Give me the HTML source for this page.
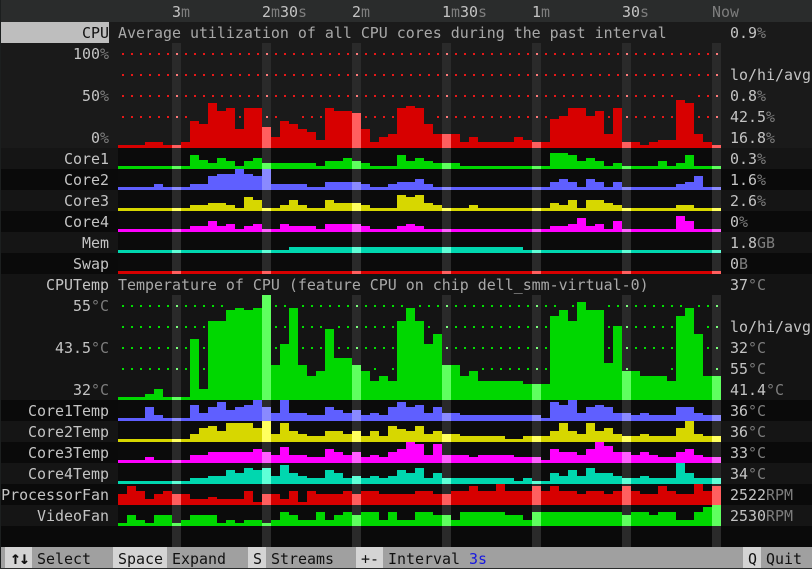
<!DOCTYPE html>
<html><head><meta charset="utf-8"><style>
html,body{margin:0;padding:0;background:#0a0a0a}
#t{position:relative;width:812px;height:569px;overflow:hidden;background:#0a0a0a;font:14.95px/21px "DejaVu Sans Mono","Liberation Mono",monospace;color:#c4c4c4}
#t svg{position:absolute;left:0;top:0}
.l,.r,.x{position:absolute;white-space:pre;height:21px;margin-top:1px}
.l{right:703px;text-align:right}
.r{left:730px}
i{font-style:normal;color:#7d7d7d}
.k{color:#111}
</style></head><body><div id="t">
<svg width="812" height="569" viewBox="0 0 812 569" shape-rendering="crispEdges">
<rect width="812" height="22" fill="#2a2c2c"/>
<rect y="22" width="812" height="126" fill="#1a1a1a"/>
<rect y="148" width="812" height="21" fill="#151515"/>
<rect y="169" width="812" height="21" fill="#0a0a0a"/>
<rect y="190" width="812" height="21" fill="#151515"/>
<rect y="211" width="812" height="21" fill="#0a0a0a"/>
<rect y="232" width="812" height="21" fill="#151515"/>
<rect y="253" width="812" height="21" fill="#0a0a0a"/>
<rect y="274" width="812" height="126" fill="#141414"/>
<rect y="400" width="812" height="21" fill="#0a0a0a"/>
<rect y="421" width="812" height="21" fill="#151515"/>
<rect y="442" width="812" height="21" fill="#0a0a0a"/>
<rect y="463" width="812" height="21" fill="#151515"/>
<rect y="484" width="812" height="21" fill="#0a0a0a"/>
<rect y="505" width="812" height="21" fill="#151515"/>
<rect x="118" y="148" width="603" height="126" fill="#0b0b0b"/>
<rect x="118" y="400" width="603" height="126" fill="#0b0b0b"/>
<rect x="1" y="22" width="108" height="21" fill="#bebebe"/>
<rect y="547" width="812" height="21" fill="#a0a0a0"/>
<rect x="5" y="547" width="27" height="21" fill="#d4d4d4"/>
<rect x="113" y="547" width="54" height="21" fill="#d4d4d4"/>
<rect x="248" y="547" width="18" height="21" fill="#d4d4d4"/>
<rect x="356" y="547" width="27" height="21" fill="#d4d4d4"/>
<rect x="743" y="547" width="18" height="21" fill="#d4d4d4"/>
<path fill="#2a2a2a" d="M172 43h9V274h-9zM172 295h9V547h-9zM262 43h9V274h-9zM262 295h9V547h-9zM352 43h9V274h-9zM352 295h9V547h-9zM442 43h9V274h-9zM442 295h9V547h-9zM532 43h9V274h-9zM532 295h9V547h-9zM622 43h9V274h-9zM622 295h9V547h-9zM712 43h9V274h-9zM712 295h9V547h-9z"/>
<g transform="translate(0.5 0)" fill="none" stroke-width="2" stroke-dasharray="2 7">
<path stroke="#e81818" d="M121.5 54H717.5M121.5 75H717.5M121.5 96H672.5M697.5 96H717.5M121.5 117H186.5M238.5 117H240.5M265.5 117H276.5M301.5 117H321.5M364.5 117H393.5M436.5 117H546.5M607.5 117H609.5M625.5 117H672.5M697.5 117H717.5"/>
<path stroke="#00e000" transform="translate(0 0.5)" d="M121.5 305.5H222.5M274.5 305.5H285.5M301.5 305.5H402.5M418.5 305.5H555.5M571.5 305.5H573.5M607.5 305.5H681.5M697.5 305.5H717.5M121.5 326.5H204.5M274.5 326.5H285.5M301.5 326.5H321.5M337.5 326.5H393.5M427.5 326.5H429.5M445.5 326.5H546.5M607.5 326.5H609.5M625.5 326.5H672.5M706.5 326.5H717.5M121.5 347.5H186.5M202.5 347.5H204.5M274.5 347.5H276.5M301.5 347.5H321.5M337.5 347.5H393.5M445.5 347.5H546.5M607.5 347.5H609.5M625.5 347.5H672.5M706.5 347.5H717.5M121.5 368.5H186.5M202.5 368.5H204.5M373.5 368.5H375.5M391.5 368.5H393.5M481.5 368.5H546.5M670.5 368.5H672.5"/>
<g stroke-dasharray="2 19">
<path stroke="#ff7a7a" d="M176.5 53V118M266.5 53V118M356.5 53V118M446.5 53V118M536.5 53V118M626.5 53V118M716.5 53V118"/>
<path stroke="#7aff7a" d="M176.5 305V370M266.5 305V370M356.5 305V370M446.5 305V370M536.5 305V370M626.5 305V370M716.5 305V370"/>
</g>
</g>
<path fill="#d70000" d="M118 148V145h27V142h18V145h18V142h9V121h9V124h9V103h9V111h9V108h9V129h9V108h18V127h9V137h9V121h9V124h9V129h9V132h9V140h9V108h9V111h18V113h9V129h9V142h9V137h9V134h9V108h9V106h9V108h9V124h9V134h27V142h9V137h9V142h36V137h9V140h9V142h18V119h9V116h9V108h18V116h9V111h9V134h9V108h9V142h18V145h9V142h9V140h18V100h9V103h9V134h9V142h9V145h9V148z"/>
<path fill="#ff5f5f" d="M172 145h9V148h-9zM262 127h9V148h-9zM352 113h9V148h-9zM442 134h9V148h-9zM532 142h9V148h-9zM622 142h9V148h-9zM712 145h9V148h-9z"/>
<path fill="#00d700" d="M118 169V166h72V155h9V160h9V163h9V158h9V161h9V166h9V161h9V158h9V163h54V166h9V161h18V158h9V161h9V163h9V166h27V155h9V161h9V158h9V161h9V163h27V166h90V153h18V155h9V161h9V158h9V161h9V166h9V163h9V166h36V161h9V166h9V163h9V155h9V166h27V169z"/>
<path fill="#5fff5f" d="M172 166h9V169h-9zM262 163h9V169h-9zM352 161h9V169h-9zM442 163h9V169h-9zM532 166h9V169h-9zM622 166h9V169h-9zM712 166h9V169h-9z"/>
<path fill="#5f5fff" d="M118 190V187h36V184h9V187h27V184h18V176h9V174h18V169h9V174h9V176h9V169h9V184h36V187h18V182h36V184h9V187h18V184h9V182h18V179h9V184h9V187h117V182h9V179h9V182h9V187h9V179h9V182h9V187h9V182h9V187h54V184h9V182h9V176h9V187h18V190z"/>
<path fill="#8a8aff" d="M172 187h9V190h-9zM262 169h9V190h-9zM352 182h9V190h-9zM442 187h9V190h-9zM532 187h9V190h-9zM622 187h9V190h-9zM712 187h9V190h-9z"/>
<path fill="#d7d700" d="M118 211V208h72V205h18V203h18V205h9V208h9V197h9V200h9V208h18V205h9V200h9V205h9V208h18V200h9V203h27V205h9V208h27V195h9V197h9V195h9V203h9V205h9V208h27V205h9V208h72V203h9V205h9V200h9V208h9V200h18V203h9V205h9V208h54V205h18V208h27V211z"/>
<path fill="#ffff5f" d="M172 208h9V211h-9zM262 208h9V211h-9zM352 203h9V211h-9zM442 208h9V211h-9zM532 208h9V211h-9zM622 208h9V211h-9zM712 208h9V211h-9z"/>
<path fill="#ff00ff" d="M118 232V229h72V226h18V221h9V226h9V224h9V229h9V226h9V224h9V229h18V224h9V226h27V229h9V224h36V226h9V229h27V226h9V224h9V226h9V229h126V226h18V224h9V218h9V226h9V224h9V229h9V221h9V229h54V216h9V221h9V229h27V232z"/>
<path fill="#ff5fff" d="M172 229h9V232h-9zM262 229h9V232h-9zM352 224h9V232h-9zM442 229h9V232h-9zM532 229h9V232h-9zM622 229h9V232h-9zM712 229h9V232h-9z"/>
<path fill="#00d7af" d="M118 253V250h171V247h234V250h198V253z"/>
<path fill="#5fffd7" d="M172 250h9V253h-9zM262 250h9V253h-9zM352 247h9V253h-9zM442 247h9V253h-9zM532 250h9V253h-9zM622 250h9V253h-9zM712 250h9V253h-9z"/>
<path fill="#d70000" d="M118 271H721V274H118z"/>
<path fill="#ff5f5f" d="M172 271h9V274h-9zM262 271h9V274h-9zM352 271h9V274h-9zM442 271h9V274h-9zM532 271h9V274h-9zM622 271h9V274h-9zM712 271h9V274h-9z"/>
<path fill="#00d700" d="M118 400V397h27V394h9V389h9V397h27V339h9V389h9V321h18V310h9V308h9V310h9V308h9V295h9V365h9V344h9V308h9V365h9V376h9V371h9V329h9V358h18V365h9V371h9V381h9V376h9V381h9V321h9V308h9V321h9V344h9V334h9V365h18V376h9V371h9V381h45V384h27V316h9V310h9V321h9V302h9V310h18V363h9V326h9V371h18V376h27V381h9V316h9V308h9V334h9V376h18V400z"/>
<path fill="#5fff5f" d="M172 397h9V400h-9zM262 295h9V400h-9zM352 365h9V400h-9zM442 365h9V400h-9zM532 384h9V400h-9zM622 371h9V400h-9zM712 376h9V400h-9z"/>
<path fill="#5f5fff" d="M118 421V418h27V407h9V415h9V418h27V405h9V413h9V407h9V402h9V410h9V407h9V405h9V400h9V407h9V413h9V400h9V413h18V415h18V407h9V410h9V413h9V410h9V415h9V413h9V415h9V407h9V402h9V407h9V405h9V413h9V407h9V413h18V415h81V418h9V402h9V405h9V400h9V413h9V407h9V405h9V407h9V413h18V415h9V413h9V415h27V407h18V413h9V415h18V421z"/>
<path fill="#8a8aff" d="M172 418h9V421h-9zM262 407h9V421h-9zM352 410h9V421h-9zM442 413h9V421h-9zM532 415h9V421h-9zM622 413h9V421h-9zM712 415h9V421h-9z"/>
<path fill="#d7d700" d="M118 442V439h72V434h9V428h9V426h9V431h9V423h27V428h9V421h9V434h9V423h9V431h9V434h9V436h18V431h18V434h9V431h9V436h9V431h9V436h9V426h9V429h9V431h9V426h9V434h9V431h9V434h18V436h45V439h18V436h27V431h9V423h9V431h9V434h9V423h9V431h9V428h9V434h9V436h18V434h9V436h27V428h9V421h9V434h9V436h18V442z"/>
<path fill="#ffff5f" d="M172 439h9V442h-9zM262 421h9V442h-9zM352 431h9V442h-9zM442 434h9V442h-9zM532 436h9V442h-9zM622 436h9V442h-9zM712 436h9V442h-9z"/>
<path fill="#ff00ff" d="M118 463V460h27V457h9V460h36V455h18V452h45V449h9V452h9V455h9V447h9V455h18V457h18V449h9V452h9V455h9V452h9V457h9V455h9V457h9V452h9V449h9V442h9V444h9V455h9V444h9V455h27V457h9V455h36V457h27V460h9V449h9V452h18V455h9V449h9V442h9V446h9V452h18V455h9V452h9V455h9V457h18V452h9V449h9V455h9V457h18V463z"/>
<path fill="#ff5fff" d="M172 460h9V463h-9zM262 452h9V463h-9zM352 452h9V463h-9zM442 455h9V463h-9zM532 457h9V463h-9zM622 452h9V463h-9zM712 457h9V463h-9z"/>
<path fill="#00d7af" d="M118 484V481h72V478h18V476h18V470h9V473h9V468h9V470h9V468h9V476h9V465h9V473h9V476h9V478h18V470h9V473h9V478h9V476h9V478h9V476h9V478h9V476h9V470h9V473h9V468h9V478h9V473h9V478h72V481h9V478h9V481h18V473h9V476h9V470h9V476h9V468h9V473h18V476h9V478h18V476h9V478h27V463h9V473h9V478h27V484z"/>
<path fill="#5fffd7" d="M172 481h9V484h-9zM262 468h9V484h-9zM352 476h9V484h-9zM442 478h9V484h-9zM532 481h9V484h-9zM622 478h9V484h-9zM712 478h9V484h-9z"/>
<path fill="#d70000" d="M118 505V494h9V486h9V491h9V499h9V494h9V491h9V494h18V499h18V497h9V499h27V491h9V502h9V494h18V499h9V491h9V502h9V491h9V494h27V491h9V494h9V491h18V494h36V491h18V494h18V491h18V486h9V491h18V484h9V491h27V486h9V491h9V486h9V491h18V494h9V491h18V494h9V491h9V486h9V491h9V494h18V486h9V491h9V494h18V484h9V491h9V486h9V505z"/>
<path fill="#ff5f5f" d="M172 494h9V505h-9zM262 494h9V505h-9zM352 494h9V505h-9zM442 494h9V505h-9zM532 486h9V505h-9zM622 486h9V505h-9zM712 486h9V505h-9z"/>
<path fill="#00d700" d="M118 526V523h9V515h9V520h9V523h9V515h18V523h9V520h9V515h27V523h9V520h9V523h9V520h18V523h9V520h9V512h9V515h9V520h18V512h9V520h9V515h9V512h9V515h9V512h18V520h9V512h9V520h18V512h18V515h18V520h9V512h45V515h18V520h9V512h90V515h9V512h18V515h9V512h18V520h18V512h9V507h9V505h9V526z"/>
<path fill="#5fff5f" d="M172 523h9V526h-9zM262 523h9V526h-9zM352 515h9V526h-9zM442 515h9V526h-9zM532 512h9V526h-9zM622 515h9V526h-9zM712 505h9V526h-9z"/>
<rect width="1" height="569" fill="#1c1f1f"/>
<rect y="568" width="812" height="1" fill="#2a2c2c"/>
</svg>

<span class="x" style="left:172px;top:1px">3<i>m</i></span>
<span class="x" style="left:262px;top:1px">2<i>m</i>30<i>s</i></span>
<span class="x" style="left:352px;top:1px">2<i>m</i></span>
<span class="x" style="left:442px;top:1px">1<i>m</i>30<i>s</i></span>
<span class="x" style="left:532px;top:1px">1<i>m</i></span>
<span class="x" style="left:622px;top:1px">30<i>s</i></span>
<span class="x" style="left:712px;top:1px"><i>Now</i></span>

<span class="l k" style="top:22px">CPU</span>
<span class="x" style="left:118px;top:22px;color:#a8a8a8">Average utilization of all CPU cores during the past interval</span>
<span class="l" style="top:43px">100<i>%</i></span>
<span class="l" style="top:85px">50<i>%</i></span>
<span class="l" style="top:127px">0<i>%</i></span>
<span class="l" style="top:148px">Core1</span>
<span class="l" style="top:169px">Core2</span>
<span class="l" style="top:190px">Core3</span>
<span class="l" style="top:211px">Core4</span>
<span class="l" style="top:232px">Mem</span>
<span class="l" style="top:253px">Swap</span>
<span class="l" style="top:274px">CPUTemp</span>
<span class="x" style="left:118px;top:274px;color:#a8a8a8">Temperature of CPU (feature CPU on chip dell_smm-virtual-0)</span>
<span class="l" style="top:295px">55<i>°C</i></span>
<span class="l" style="top:337px">43.5<i>°C</i></span>
<span class="l" style="top:379px">32<i>°C</i></span>
<span class="l" style="top:400px">Core1Temp</span>
<span class="l" style="top:421px">Core2Temp</span>
<span class="l" style="top:442px">Core3Temp</span>
<span class="l" style="top:463px">Core4Temp</span>
<span class="l" style="top:484px">ProcessorFan</span>
<span class="l" style="top:505px">VideoFan</span>

<span class="r" style="top:22px">0.9<i>%</i></span>
<span class="r" style="top:64px">lo/hi/avg</span>
<span class="r" style="top:85px">0.8<i>%</i></span>
<span class="r" style="top:106px">42.5<i>%</i></span>
<span class="r" style="top:127px">16.8<i>%</i></span>
<span class="r" style="top:148px">0.3<i>%</i></span>
<span class="r" style="top:169px">1.6<i>%</i></span>
<span class="r" style="top:190px">2.6<i>%</i></span>
<span class="r" style="top:211px">0<i>%</i></span>
<span class="r" style="top:232px">1.8<i>GB</i></span>
<span class="r" style="top:253px">0<i>B</i></span>
<span class="r" style="top:274px">37<i>°C</i></span>
<span class="r" style="top:316px">lo/hi/avg</span>
<span class="r" style="top:337px">32<i>°C</i></span>
<span class="r" style="top:358px">55<i>°C</i></span>
<span class="r" style="top:379px">41.4<i>°C</i></span>
<span class="r" style="top:400px">36<i>°C</i></span>
<span class="r" style="top:421px">36<i>°C</i></span>
<span class="r" style="top:442px">33<i>°C</i></span>
<span class="r" style="top:463px">34<i>°C</i></span>
<span class="r" style="top:484px">2522<i>RPM</i></span>
<span class="r" style="top:505px">2530<i>RPM</i></span>

<span class="x k" style="left:10px;top:547px;font-size:18px;font-weight:bold;letter-spacing:-1.8px">↑↓</span>
<span class="x k" style="left:37px;top:548px">Select</span>
<span class="x k" style="left:118px;top:548px">Space</span>
<span class="x k" style="left:172px;top:548px">Expand</span>
<span class="x k" style="left:253px;top:548px">S</span>
<span class="x k" style="left:271px;top:548px">Streams</span>
<span class="x k" style="left:361px;top:548px">+-</span>
<span class="x k" style="left:388px;top:548px">Interval</span>
<span class="x" style="left:469px;top:548px;color:#1818e0">3s</span>
<span class="x k" style="left:748px;top:548px">Q</span>
<span class="x k" style="left:766px;top:548px">Quit</span>
</div></body></html>
